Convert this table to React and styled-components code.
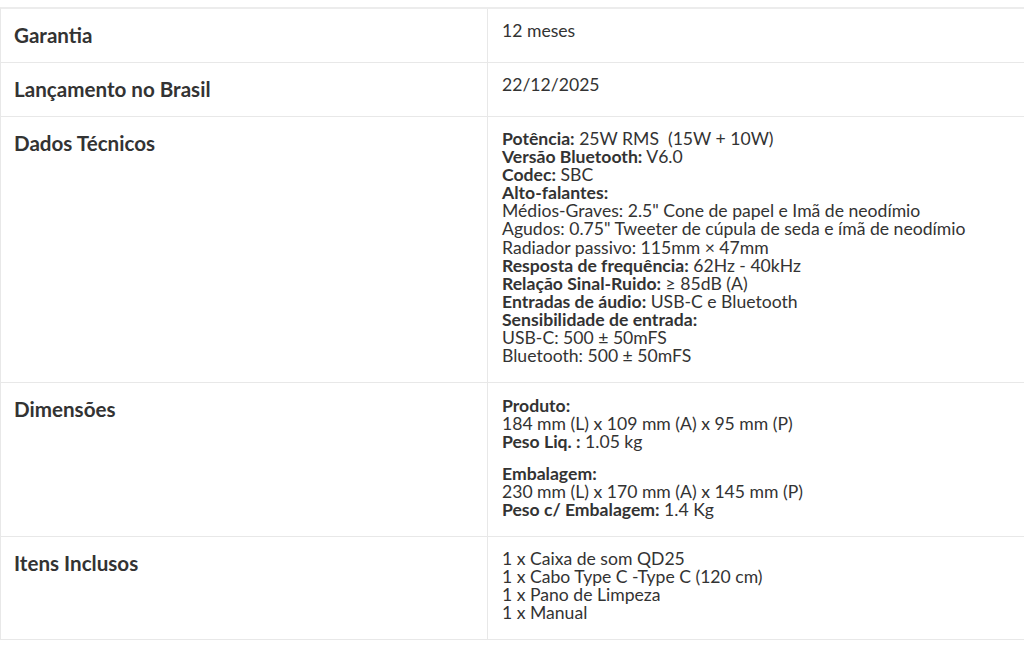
import React from 'react';
import styled, { createGlobalStyle } from 'styled-components';

const GlobalStyle = createGlobalStyle`
  body {
    margin: 0;
    background: #fff;
    font-family: Lato, "Open Sans", sans-serif;
    color: #333;
  }
`;

const Wrapper = styled.div`
  padding-top: 7px;
  width: 1040px;
`;

const SpecTable = styled.div`
  border-top: 2px solid #ececec;
  border-left: 1px solid #e8e8e8;
`;

const Row = styled.div`
  display: grid;
  grid-template-columns: 487px 1fr;
  border-bottom: 1px solid #e8e8e8;
`;

const Label = styled.div`
  padding: 14px 13px;
  font-size: 20.6px;
  line-height: 25px;
  font-weight: 700;
  color: #333;
  border-right: 1px solid #e8e8e8;
`;

const Value = styled.div`
  padding: 13px 14px 17px;
  font-size: 17.6px;
  line-height: 18.1px;
  color: #333;
`;

const Para = styled.p`
  margin: ${p => (p.$first ? '1px 0 0' : '13px 0 0')};
`;

const Line = styled.div``;

const B = styled.strong`
  font-weight: 700;
`;

const specs = [
  ['Potência:', ' 25W RMS\u00a0 (15W + 10W)'],
  ['Versão Bluetooth:', ' V6.0'],
  ['Codec:', ' SBC'],
  ['Alto-falantes:', ''],
  [null, 'Médios-Graves: 2.5" Cone de papel e Imã de neodímio'],
  [null, 'Agudos: 0.75" Tweeter de cúpula de seda e ímã de neodímio'],
  [null, 'Radiador passivo: 115mm × 47mm'],
  ['Resposta de frequência:', ' 62Hz - 40kHz'],
  ['Relação Sinal-Ruido:', ' ≥ 85dB (A)'],
  ['Entradas de áudio:', ' USB-C e Bluetooth'],
  ['Sensibilidade de entrada:', ''],
  [null, 'USB-C: 500 ± 50mFS'],
  [null, 'Bluetooth: 500 ± 50mFS'],
];

const SpecLines = ({ items }) =>
  items.map(([k, v], i) => (
    <Line key={i}>
      {k && <B>{k}</B>}
      {v}
    </Line>
  ));

export default function App() {
  return (
    <Wrapper>
      <GlobalStyle />
      <SpecTable>
        <Row>
          <Label>Garantia</Label>
          <Value>12 meses</Value>
        </Row>
        <Row>
          <Label>Lançamento no Brasil</Label>
          <Value>22/12/2025</Value>
        </Row>
        <Row>
          <Label>Dados Técnicos</Label>
          <Value>
            <SpecLines items={specs} />
          </Value>
        </Row>
        <Row>
          <Label>Dimensões</Label>
          <Value>
            <Para $first>
              <B>Produto:</B>
              <br />
              184 mm (L) x 109 mm (A) x 95 mm (P)
              <br />
              <B>Peso Liq. :</B> 1.05 kg
            </Para>
            <Para>
              <B>Embalagem:</B>
              <br />
              230 mm (L) x 170 mm (A) x 145 mm (P)
              <br />
              <B>Peso c/ Embalagem:</B> 1.4 Kg
            </Para>
          </Value>
        </Row>
        <Row>
          <Label>Itens Inclusos</Label>
          <Value>
            <SpecLines
              items={[
                [null, '1 x Caixa de som QD25'],
                [null, '1 x Cabo Type C -Type C (120 cm)'],
                [null, '1 x Pano de Limpeza'],
                [null, '1 x Manual'],
              ]}
            />
          </Value>
        </Row>
      </SpecTable>
    </Wrapper>
  );
}
